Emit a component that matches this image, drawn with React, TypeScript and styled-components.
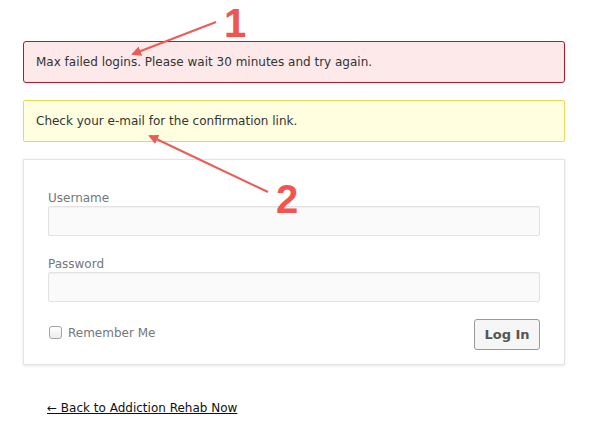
import styled, { createGlobalStyle } from 'styled-components';

const Global = createGlobalStyle`
  body {
    margin: 0;
    background: #fff;
    font-family: 'DejaVu Sans', Verdana, sans-serif;
  }
`;

const Page = styled.div`
  position: relative;
  width: 595px;
  height: 435px;
  padding: 41px 0 0 23px;
  box-sizing: border-box;
`;

const Column = styled.div`
  width: 542px;
  display: flex;
  flex-direction: column;
  gap: 17px;
`;

const Notice = styled.div<{ tone: 'error' | 'info' }>`
  box-sizing: border-box;
  height: 42px;
  padding: 0 12px;
  display: flex;
  align-items: center;
  border: 1px solid ${({ tone }) => (tone === 'error' ? '#b3192b' : '#e6db55')};
  border-radius: ${({ tone }) => (tone === 'error' ? '3px' : '2px')};
  background: ${({ tone }) => (tone === 'error' ? '#fde9e9' : '#ffffe0')};
  color: #333;
  font-size: 12px;
`;

const Card = styled.form`
  box-sizing: border-box;
  height: 206px;
  padding: 31px 24px 14px;
  border: 1px solid #e4e4e4;
  box-shadow: 0 1px 3px rgba(0, 0, 0, 0.1);
  background: #fff;
  display: flex;
  flex-direction: column;
`;

const Label = styled.label`
  display: block;
  color: #72777c;
  font-size: 12px;
  line-height: 15px;
`;

const Field = styled.div<{ spaced?: boolean }>`
  margin-top: ${({ spaced }) => (spaced ? '21px' : '0')};
`;

const Input = styled.input`
  display: block;
  box-sizing: border-box;
  width: 100%;
  height: 30px;
  margin: 0;
  border: 1px solid #e2e2e2;
  border-radius: 2px;
  background: #fafafa;
  box-shadow: inset 0 1px 1px rgba(0, 0, 0, 0.04);
`;

const Footer = styled.div`
  margin-top: 17px;
  display: flex;
  justify-content: space-between;
  align-items: center;
`;

const Remember = styled.label`
  display: flex;
  align-items: center;
  gap: 6px;
  padding-bottom: 4px;
  color: #72777c;
  font-size: 12px;
`;

const Box = styled.span`
  display: inline-block;
  width: 11px;
  height: 11px;
  margin-left: 1px;
  border: 1px solid #a5a5a5;
  border-radius: 3px;
  background: linear-gradient(#fff, #ececec);
`;

const Button = styled.button`
  box-sizing: border-box;
  width: 66px;
  height: 31px;
  border: 1px solid #999;
  border-radius: 3px;
  background: #f6f6f6;
  color: #555;
  font-family: inherit;
  font-weight: bold;
  font-size: 13px;
  padding: 0;
`;

const BackLink = styled.a`
  margin: 19px 0 0 24px;
  color: #111;
  font-size: 12px;
  text-decoration: underline;
`;

const Annotations = styled.svg`
  position: absolute;
  left: 0;
  top: 0;
  pointer-events: none;
`;

const Num = styled.text`
  font-family: 'Liberation Sans', Arial, sans-serif;
  font-weight: bold;
  font-size: 40px;
  fill: #f2554f;
`;

export default function App() {
  return (
    <Page>
      <Global />
      <Column>
        <Notice tone="error">Max failed logins. Please wait 30 minutes and try again.</Notice>
        <Notice tone="info">Check your e-mail for the confirmation link.</Notice>
        <Card onSubmit={(e) => e.preventDefault()}>
          <Field>
            <Label>Username</Label>
            <Input type="text" />
          </Field>
          <Field spaced>
            <Label>Password</Label>
            <Input type="password" />
          </Field>
          <Footer>
            <Remember>
              <Box />
              Remember Me
            </Remember>
            <Button type="submit">Log In</Button>
          </Footer>
        </Card>
        <BackLink href="#">← Back to Addiction Rehab Now</BackLink>
      </Column>
      <Annotations width="595" height="435" viewBox="0 0 595 435">
        <defs>
          <marker id="head" viewBox="0 0 10 10" refX="8" refY="5" markerWidth="5" markerHeight="5" orient="auto">
            <path d="M0 0 L10 5 L0 10 z" fill="#ee5a55" />
          </marker>
        </defs>
        <line x1="216" y1="22" x2="133" y2="54" stroke="#ee5a55" strokeWidth="2" markerEnd="url(#head)" />
        <line x1="268" y1="192" x2="150" y2="136" stroke="#ee5a55" strokeWidth="2" markerEnd="url(#head)" />
        <Num x="224" y="37">1</Num>
        <Num x="276" y="213">2</Num>
      </Annotations>
    </Page>
  );
}
